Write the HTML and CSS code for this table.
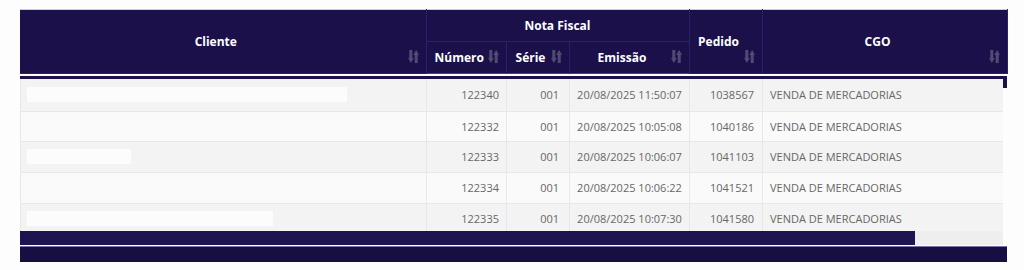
FILE: index.html
```html
<!DOCTYPE html>
<html lang="pt-BR">
<head>
<meta charset="utf-8">
<title>Notas Fiscais</title>
<link rel="stylesheet" href="styles.css">
</head>
<body>
<div class="grid">
  <table class="head">
    <colgroup>
      <col class="c-cli"><col class="c-num"><col class="c-ser"><col class="c-emi"><col class="c-ped"><col class="c-cgo-h">
    </colgroup>
    <tr class="r1">
      <th rowspan="2" class="s">Cliente<svg class="sort" viewBox="0 0 11 13"><path d="M1.3 0h3v8h1.5L2.8 13L0 8h1.3z M6.7 5h3v8h-3z M5.2 5L8.2 0L11 5z"/></svg></th>
      <th colspan="3" class="grp">Nota Fiscal</th>
      <th rowspan="2" class="s">Pedido<svg class="sort" viewBox="0 0 11 13"><path d="M1.3 0h3v8h1.5L2.8 13L0 8h1.3z M6.7 5h3v8h-3z M5.2 5L8.2 0L11 5z"/></svg></th>
      <th rowspan="2" class="s">CGO<svg class="sort" viewBox="0 0 11 13"><path d="M1.3 0h3v8h1.5L2.8 13L0 8h1.3z M6.7 5h3v8h-3z M5.2 5L8.2 0L11 5z"/></svg></th>
    </tr>
    <tr class="r2">
      <th class="s">Número<svg class="sort" viewBox="0 0 11 13"><path d="M1.3 0h3v8h1.5L2.8 13L0 8h1.3z M6.7 5h3v8h-3z M5.2 5L8.2 0L11 5z"/></svg></th>
      <th class="s">Série<svg class="sort" viewBox="0 0 11 13"><path d="M1.3 0h3v8h1.5L2.8 13L0 8h1.3z M6.7 5h3v8h-3z M5.2 5L8.2 0L11 5z"/></svg></th>
      <th class="s">Emissão<svg class="sort" viewBox="0 0 11 13"><path d="M1.3 0h3v8h1.5L2.8 13L0 8h1.3z M6.7 5h3v8h-3z M5.2 5L8.2 0L11 5z"/></svg></th>
    </tr>
  </table>
  <div class="bodywrap">
    <div class="bodyinner">
      <div class="topline"></div>
      <table class="body">
        <colgroup>
          <col class="c-cli"><col class="c-num"><col class="c-ser"><col class="c-emi"><col class="c-ped"><col class="c-cgo">
        </colgroup>
        <tr class="odd first"><td class="cli"><span class="blur" style="width:320px"></span></td><td class="num">122340</td><td class="ser">001</td><td class="emi">20/08/2025 11:50:07</td><td class="ped">1038567</td><td class="cgo">VENDA DE MERCADORIAS</td></tr>
        <tr class="even second"><td class="cli"></td><td class="num">122332</td><td class="ser">001</td><td class="emi">20/08/2025 10:05:08</td><td class="ped">1040186</td><td class="cgo">VENDA DE MERCADORIAS</td></tr>
        <tr class="odd"><td class="cli"><span class="blur" style="width:104px"></span></td><td class="num">122333</td><td class="ser">001</td><td class="emi">20/08/2025 10:06:07</td><td class="ped">1041103</td><td class="cgo">VENDA DE MERCADORIAS</td></tr>
        <tr class="even"><td class="cli"></td><td class="num">122334</td><td class="ser">001</td><td class="emi">20/08/2025 10:06:22</td><td class="ped">1041521</td><td class="cgo">VENDA DE MERCADORIAS</td></tr>
        <tr class="odd"><td class="cli"><span class="blur" style="width:246px"></span></td><td class="num">122335</td><td class="ser">001</td><td class="emi">20/08/2025 10:07:30</td><td class="ped">1041580</td><td class="cgo">VENDA DE MERCADORIAS</td></tr>
      </table>
    </div>
    <div class="vscroll"><div class="vthumb"></div></div>
  </div>
  <div class="hscroll"><div class="hthumb"></div></div>
  <div class="footer"></div>
</div>
</body>
</html>
```

FILE: styles.css
```css
html, body {
  margin: 0;
  padding: 0;
  background: #fdfdfd;
}
body {
  font-family: "Open Sans", "Liberation Sans", sans-serif;
  font-size: 12px;
}
.grid {
  margin: 9px 0 0 20px;
  width: 987px;
}
table {
  border-collapse: collapse;
  table-layout: fixed;
}
.c-cli { width: 406px; }
.c-num { width: 80px; }
.c-ser { width: 63px; }
.c-emi { width: 120px; }
.c-ped { width: 73px; }
.c-cgo-h { width: 245px; }
.c-cgo { width: 241px; }

.head {
  width: 987px;
  background: #1b104a;
  border-top: 1px solid #cfcbdc;
  border-bottom: 1px solid #4a3f86;
}
.head th {
  position: relative;
  color: #ffffff;
  font-weight: 700;
  font-size: 12px;
  text-align: center;
  padding: 0 22px 0 8px;
  border-left: 1px solid #2b206c;
  border-right: 1px solid #2b206c;
  white-space: nowrap;
}
.head th:first-child { border-left: 0; }
.head tr.r1 th { border-bottom: 1px solid #2b206c; }
.head tr.r1 { height: 32px; }
.head tr.r2 { height: 32px; }
.head th.grp { padding: 0 8px; }
.sort {
  position: absolute;
  right: 7px;
  bottom: 10px;
  width: 11px;
  height: 13px;
  fill: #514b74;
}

.bodywrap {
  display: flex;
  margin-top: 2px;
}
.bodyinner {
  width: 983px;
  height: 155px;
  overflow: hidden;
}
.topline {
  height: 3px;
  background: #1b104a;
}
.body {
  width: 983px;
  color: #676767;
  font-size: 11px;
  border-left: 1px solid #e6e6e6;
}
.body td {
  padding: 0 8px;
  border: 1px solid #e8e8e8;
  border-top: 0;
  white-space: nowrap;
  overflow: hidden;
}
.body tr { height: 31px; }
.body tr.first { height: 32px; }
.body tr.second { height: 30px; }
.body tr.odd td { background: #f3f3f3; }
.body tr.even td { background: #fafafa; }
.body td.cli { padding-left: 6px; }
.body td.num { text-align: right; padding-right: 7px; }
.body td.ser { text-align: right; padding-right: 10px; }
.body td.emi { text-align: center; padding: 0 4px; }
.body td.ped { text-align: right; padding-right: 8px; }
.body td.cgo { text-align: left; padding-left: 7px; }
.blur {
  display: block;
  height: 15px;
  background: #fcfcfc;
}
.vscroll {
  width: 4px;
  height: 155px;
  background: #fdfdfd;
}
.vthumb {
  height: 12px;
  background: #1b104a;
}
.hscroll {
  display: flex;
  width: 983px;
  height: 14px;
  background: #eeeeee;
}
.hthumb {
  width: 895px;
  background: #1e1452;
}
.footer {
  height: 15px;
  margin-top: 1px;
  background: #170e42;
  border-top: 1px solid #7a70a8;
}
```
